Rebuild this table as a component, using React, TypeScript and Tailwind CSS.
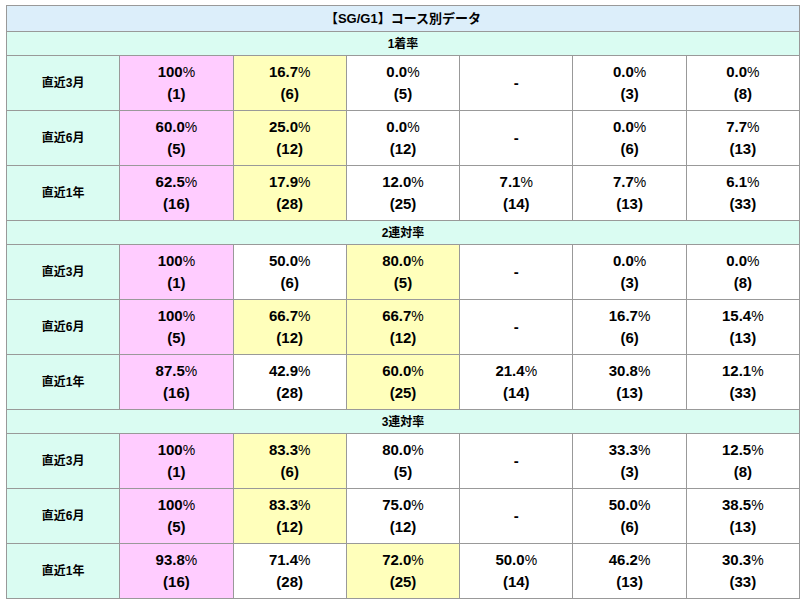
import React from "react";

type Cell = { v: string; n?: string; bg?: "pink" | "yellow" };

type Section = { title: string; rows: { label: string; cells: Cell[] }[] };

const P = "pink" as const;
const Y = "yellow" as const;

const sections: Section[] = [
  {
    title: "1着率",
    rows: [
      {
        label: "直近3月",
        cells: [
          { v: "100", n: "1", bg: P },
          { v: "16.7", n: "6", bg: Y },
          { v: "0.0", n: "5" },
          { v: "-" },
          { v: "0.0", n: "3" },
          { v: "0.0", n: "8" },
        ],
      },
      {
        label: "直近6月",
        cells: [
          { v: "60.0", n: "5", bg: P },
          { v: "25.0", n: "12", bg: Y },
          { v: "0.0", n: "12" },
          { v: "-" },
          { v: "0.0", n: "6" },
          { v: "7.7", n: "13" },
        ],
      },
      {
        label: "直近1年",
        cells: [
          { v: "62.5", n: "16", bg: P },
          { v: "17.9", n: "28", bg: Y },
          { v: "12.0", n: "25" },
          { v: "7.1", n: "14" },
          { v: "7.7", n: "13" },
          { v: "6.1", n: "33" },
        ],
      },
    ],
  },
  {
    title: "2連対率",
    rows: [
      {
        label: "直近3月",
        cells: [
          { v: "100", n: "1", bg: P },
          { v: "50.0", n: "6" },
          { v: "80.0", n: "5", bg: Y },
          { v: "-" },
          { v: "0.0", n: "3" },
          { v: "0.0", n: "8" },
        ],
      },
      {
        label: "直近6月",
        cells: [
          { v: "100", n: "5", bg: P },
          { v: "66.7", n: "12", bg: Y },
          { v: "66.7", n: "12", bg: Y },
          { v: "-" },
          { v: "16.7", n: "6" },
          { v: "15.4", n: "13" },
        ],
      },
      {
        label: "直近1年",
        cells: [
          { v: "87.5", n: "16", bg: P },
          { v: "42.9", n: "28" },
          { v: "60.0", n: "25", bg: Y },
          { v: "21.4", n: "14" },
          { v: "30.8", n: "13" },
          { v: "12.1", n: "33" },
        ],
      },
    ],
  },
  {
    title: "3連対率",
    rows: [
      {
        label: "直近3月",
        cells: [
          { v: "100", n: "1", bg: P },
          { v: "83.3", n: "6", bg: Y },
          { v: "80.0", n: "5" },
          { v: "-" },
          { v: "33.3", n: "3" },
          { v: "12.5", n: "8" },
        ],
      },
      {
        label: "直近6月",
        cells: [
          { v: "100", n: "5", bg: P },
          { v: "83.3", n: "12", bg: Y },
          { v: "75.0", n: "12" },
          { v: "-" },
          { v: "50.0", n: "6" },
          { v: "38.5", n: "13" },
        ],
      },
      {
        label: "直近1年",
        cells: [
          { v: "93.8", n: "16", bg: P },
          { v: "71.4", n: "28" },
          { v: "72.0", n: "25", bg: Y },
          { v: "50.0", n: "14" },
          { v: "46.2", n: "13" },
          { v: "30.3", n: "33" },
        ],
      },
    ],
  },
];

function ValueCell({ cell }: { cell: Cell }) {
  const bg =
    cell.bg === "pink" ? "bg-[#ffccff]" : cell.bg === "yellow" ? "bg-[#ffffbb]" : "bg-white";
  return (
    <td className={`${bg} border border-[#999] h-[55px] p-0 text-center align-middle`}>
      {cell.v === "-" ? (
        <span className="text-[15px] font-bold">-</span>
      ) : (
        <div className="text-[15px] leading-[22px]">
          <div>
            <span className="font-bold">{cell.v}</span>
            <span className="font-normal text-[14px]">%</span>
          </div>
          <div className="font-bold">({cell.n})</div>
        </div>
      )}
    </td>
  );
}

export default function App() {
  return (
    <div
      className="pl-[6px] pt-[5px] text-black"
      style={{ fontFamily: '"Liberation Sans", "Noto Sans CJK JP", sans-serif' }}
    >
      <table className="w-[794px] table-fixed border-collapse">
        <tbody>
          <tr>
            <td
              colSpan={7}
              className="bg-[#dceefa] border border-[#999] h-[26px] p-0 text-center text-[13px] font-bold"
            >
              【SG/G1】コース別データ
            </td>
          </tr>
          {sections.map((s) => (
            <React.Fragment key={s.title}>
              <tr>
                <td
                  colSpan={7}
                  className="bg-[#dafcf2] border border-[#999] h-[24px] p-0 text-center text-[12px] font-bold"
                >
                  {s.title}
                </td>
              </tr>
              {s.rows.map((r) => (
                <tr key={r.label}>
                  <td className="bg-[#dafcf2] border border-[#999] h-[55px] p-0 text-center text-[12px] font-bold">
                    {r.label}
                  </td>
                  {r.cells.map((c, i) => (
                    <ValueCell key={i} cell={c} />
                  ))}
                </tr>
              ))}
            </React.Fragment>
          ))}
        </tbody>
      </table>
    </div>
  );
}
